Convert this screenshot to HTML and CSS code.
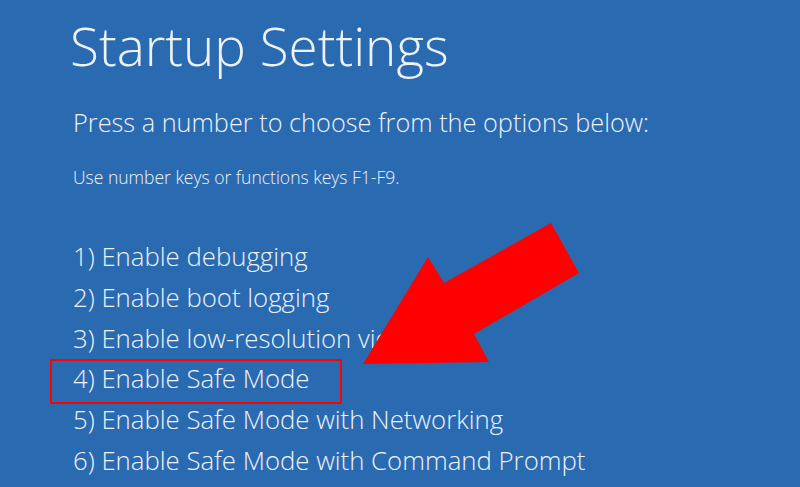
FILE: index.html
```html
<!DOCTYPE html>
<html>
<head>
<meta charset="utf-8">
<link rel="stylesheet" href="styles.css">
</head>
<body>
<div class="screen">
  <h1 class="title">Startup Settings</h1>
  <p class="lead">Press a number to choose from the options below:</p>
  <p class="hint">Use number keys or functions keys F1-F9.</p>
  <ul class="options">
    <li>1) Enable debugging</li>
    <li>2) Enable boot logging</li>
    <li>3) Enable low-resolution video</li>
    <li class="selected">4) Enable Safe Mode</li>
    <li>5) Enable Safe Mode with Networking</li>
    <li>6) Enable Safe Mode with Command Prompt</li>
  </ul>
  <svg class="arrow" width="800" height="487" viewBox="0 0 800 487">
    <polygon points="363,364 428,257 444,283 551,223 579,273 474,334 489,362" fill="#ff0000"/>
  </svg>
</div>
</body>
</html>
```
FILE: styles.css
```css
html, body {
  margin: 0;
  padding: 0;
}
body {
  width: 800px;
  height: 487px;
  overflow: hidden;
  background: #2a6ab1;
}
.screen {
  position: relative;
  width: 800px;
  height: 487px;
  padding: 0 0 0 73px;
  box-sizing: border-box;
  color: #eef2f8;
  font-family: "Open Sans", "Noto Sans", sans-serif;
}
.title {
  margin: 0;
  padding-top: 10px;
  margin-left: -3px;
  font-size: 53px;
  font-weight: 300;
  line-height: 72px;
}
.lead {
  margin: 24px 0 0 0;
  font-size: 25.3px;
  font-weight: 300;
  line-height: 32px;
}
.hint {
  margin: 28px 0 0 0;
  font-size: 17.5px;
  font-weight: 300;
  line-height: 22px;
}
.options {
  list-style: none;
  margin: 48px 0 0 0;
  padding: 0;
}
.options li {
  font-size: 25.75px;
  font-weight: 300;
  line-height: 40.8px;
  height: 40.8px;
}
.options li.selected {
  position: relative;
}
.options li.selected::before {
  content: "";
  position: absolute;
  left: -23px;
  top: 1px;
  width: 292px;
  height: 45px;
  border: 2px solid #ff0000;
  box-sizing: border-box;
}
.arrow {
  position: absolute;
  left: 0;
  top: 0;
}
```
